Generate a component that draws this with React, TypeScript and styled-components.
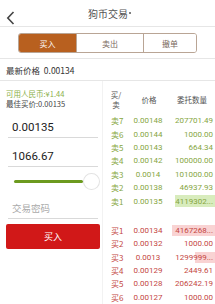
import React from "react";
import styled, { createGlobalStyle } from "styled-components";

const GlobalStyle = createGlobalStyle`
  html, body {
    margin: 0;
    padding: 0;
    background: #ffffff;
  }
  body {
    font-family: "Noto Sans CJK SC", "Noto Sans", Roboto, sans-serif;
    width: 215px;
    height: 304px;
    overflow: hidden;
  }
`;

const GREEN = "#86a63f";
const RED = "#c4473f";
const BROWN = "#b8601f";

const sells = [
  { label: "卖7", price: "0.00148", qty: "207701.49" },
  { label: "卖6", price: "0.00144", qty: "1000.00" },
  { label: "卖5", price: "0.00143", qty: "664.34" },
  { label: "卖4", price: "0.00142", qty: "100000.00" },
  { label: "卖3", price: "0.0014", qty: "101000.00" },
  { label: "卖2", price: "0.00138", qty: "46937.93" },
  { label: "卖1", price: "0.00135", qty: "4119302...", bar: 40 },
];

const buys = [
  { label: "买1", price: "0.00134", qty: "4167268...", bar: 43 },
  { label: "买2", price: "0.00132", qty: "1000.00" },
  { label: "买3", price: "0.0013", qty: "1299999...", bar: 20 },
  { label: "买4", price: "0.00129", qty: "2449.61" },
  { label: "买5", price: "0.00128", qty: "206242.19" },
  { label: "买6", price: "0.00127", qty: "1000.00" },
];

function App() {
  return (
    <Page>
      <GlobalStyle />
      <Header>
        <Back>
          <svg width="9" height="14" viewBox="0 0 9 14">
            <path d="M7.5 1 L1.8 7 L7.5 13" fill="none" stroke="#444" strokeWidth="1.6" />
          </svg>
        </Back>
        <Title>
          狗币交易<Dot />
        </Title>
      </Header>

      <TabBar>
        <Segments>
          <Segment active>买入</Segment>
          <Segment>卖出</Segment>
          <Segment>撤单</Segment>
        </Segments>
      </TabBar>

      <LatestRow>最新价格&nbsp;&nbsp;0.00134</LatestRow>

      <Body>
        <LeftCol>
          <Available>可用人民币:¥1.44</Available>
          <BestPrice>最佳买价:0.00135</BestPrice>
          <Field>0.00135</Field>
          <Field>1066.67</Field>
          <SliderRow>
            <SliderTrack />
            <SliderThumb />
          </SliderRow>
          <Field placeholder>交易密码</Field>
          <BuyButton>买入</BuyButton>
        </LeftCol>

        <RightCol>
          <HeadRow>
            <HeadStack>
              <span>买/</span>
              <span>卖</span>
            </HeadStack>
            <HeadCell>价格</HeadCell>
            <HeadCell>委托数量</HeadCell>
          </HeadRow>
          {sells.map((r) => (
            <Row key={r.label} tone={GREEN}>
              <Label>{r.label}</Label>
              <Price>{r.price}</Price>
              <Qty>
                {r.bar ? <Bar style={{ width: r.bar }} tone="#d8ecbd" /> : null}
                <span>{r.qty}</span>
              </Qty>
            </Row>
          ))}
          <Gap />
          {buys.map((r) => (
            <Row key={r.label} tone={RED}>
              <Label>{r.label}</Label>
              <Price>{r.price}</Price>
              <Qty>
                {r.bar ? <Bar style={{ width: r.bar }} tone="#f9d3d3" /> : null}
                <span>{r.qty}</span>
              </Qty>
            </Row>
          ))}
        </RightCol>
      </Body>
    </Page>
  );
}
export default App;

const Page = styled.div`
  width: 215px;
  height: 304px;
  background: #fff;
  overflow: hidden;
`;

const Header = styled.div`
  position: relative;
  height: 26px;
  display: flex;
  align-items: center;
  justify-content: center;
  border-bottom: 1px solid #e6e6e6;
`;

const Back = styled.div`
  position: absolute;
  left: 6px;
  top: 6px;
`;

const Title = styled.div`
  font-size: 10px;
  color: #555;
  display: flex;
  align-items: center;
  margin-left: 4px;
`;

const Dot = styled.span`
  width: 2px;
  height: 2px;
  border-radius: 50%;
  background: #555;
  margin-left: 1px;
`;

const TabBar = styled.div`
  padding: 6px 18px 5px 18px;
  border-bottom: 1px solid #e6e6e6;
`;

const Segments = styled.div`
  display: grid;
  grid-template-columns: 57px 67px 1fr;
  height: 18px;
  border: 1px solid #b9a595;
  border-radius: 3px;
  overflow: hidden;
`;

const Segment = styled.div<{ active?: boolean }>`
  display: flex;
  align-items: center;
  justify-content: center;
  font-size: 8px;
  color: ${(p) => (p.active ? "#fff" : "#7a6a5e")};
  background: ${(p) => (p.active ? BROWN : "#fff")};
  & + & {
    border-left: 1px solid #b9a595;
  }
`;

const LatestRow = styled.div`
  height: 21px;
  display: flex;
  align-items: center;
  padding-left: 6px;
  font-size: 8.5px;
  color: #333;
  border-bottom: 1px solid #e6e6e6;
`;

const Body = styled.div`
  display: grid;
  grid-template-columns: 103px 1fr;
`;

const LeftCol = styled.div`
  padding: 8px 2px 0 6px;
  display: flex;
  flex-direction: column;
  border-right: 1px solid #f2f2f2;
`;

const Available = styled.div`
  font-size: 7.5px;
  color: #8bb04a;
  line-height: 10px;
`;

const BestPrice = styled.div`
  font-size: 7.5px;
  color: #444;
  line-height: 10px;
`;

const Field = styled.div<{ placeholder?: boolean }>`
  margin: 8px 2px 0 2px;
  height: 20px;
  padding-left: 4px;
  display: flex;
  align-items: center;
  font-family: Roboto, "Noto Sans CJK SC", sans-serif;
  font-size: ${(p) => (p.placeholder ? "9.5px" : "11.5px")};
  color: ${(p) => (p.placeholder ? "#aaa" : "#222")};
  border-bottom: 1px solid #d9d9d9;
`;

const SliderRow = styled.div`
  height: 22px;
  margin-top: 3px;
  margin-bottom: -2px;
  display: flex;
  align-items: center;
  padding-left: 8px;
`;

const SliderTrack = styled.div`
  width: 71px;
  height: 3px;
  background: #6c9a1f;
  border-radius: 2px;
`;

const SliderThumb = styled.div`
  width: 17px;
  height: 17px;
  border-radius: 50%;
  border: 1px solid #e3e3e3;
  background: #fff;
  box-sizing: border-box;
`;

const BuyButton = styled.div`
  margin-top: 5px;
  height: 25px;
  display: flex;
  align-items: center;
  justify-content: center;
  background: #d11818;
  border-radius: 2px;
  color: #fff;
  font-size: 9px;
`;

const RightCol = styled.div`
  display: flex;
  flex-direction: column;
  padding-top: 6px;
`;

const HeadRow = styled.div`
  display: grid;
  grid-template-columns: 26px 40px 1fr;
  align-items: center;
  height: 25px;
  margin-bottom: 2px;
`;

const HeadCell = styled.div`
  font-size: 7.5px;
  color: #555;
  text-align: center;
  line-height: 10px;
`;

const HeadStack = styled.div`
  display: flex;
  flex-direction: column;
  align-items: center;
  font-size: 7.5px;
  color: #555;
  line-height: 10px;
  span {
    display: block;
    height: 10px;
  }
`;

const Row = styled.div<{ tone: string }>`
  display: grid;
  grid-template-columns: 24px 42px 1fr;
  align-items: center;
  height: 13.4px;
  font-size: 8px;
  color: ${(p) => p.tone};
  font-family: Roboto, "Noto Sans CJK SC", sans-serif;
`;

const Label = styled.div`
  padding-left: 8px;
  font-family: "Noto Sans CJK SC", sans-serif;
`;

const Price = styled.div`
  text-align: center;
`;

const Qty = styled.div`
  position: relative;
  height: 100%;
  display: flex;
  align-items: center;
  justify-content: flex-end;
  padding-right: 2px;
  white-space: nowrap;
  span {
    position: relative;
  }
`;

const Bar = styled.div<{ tone: string }>`
  position: absolute;
  right: 0;
  top: 1px;
  bottom: 1px;
  background: ${(p) => p.tone};
`;

const Gap = styled.div`
  height: 16px;
`;
